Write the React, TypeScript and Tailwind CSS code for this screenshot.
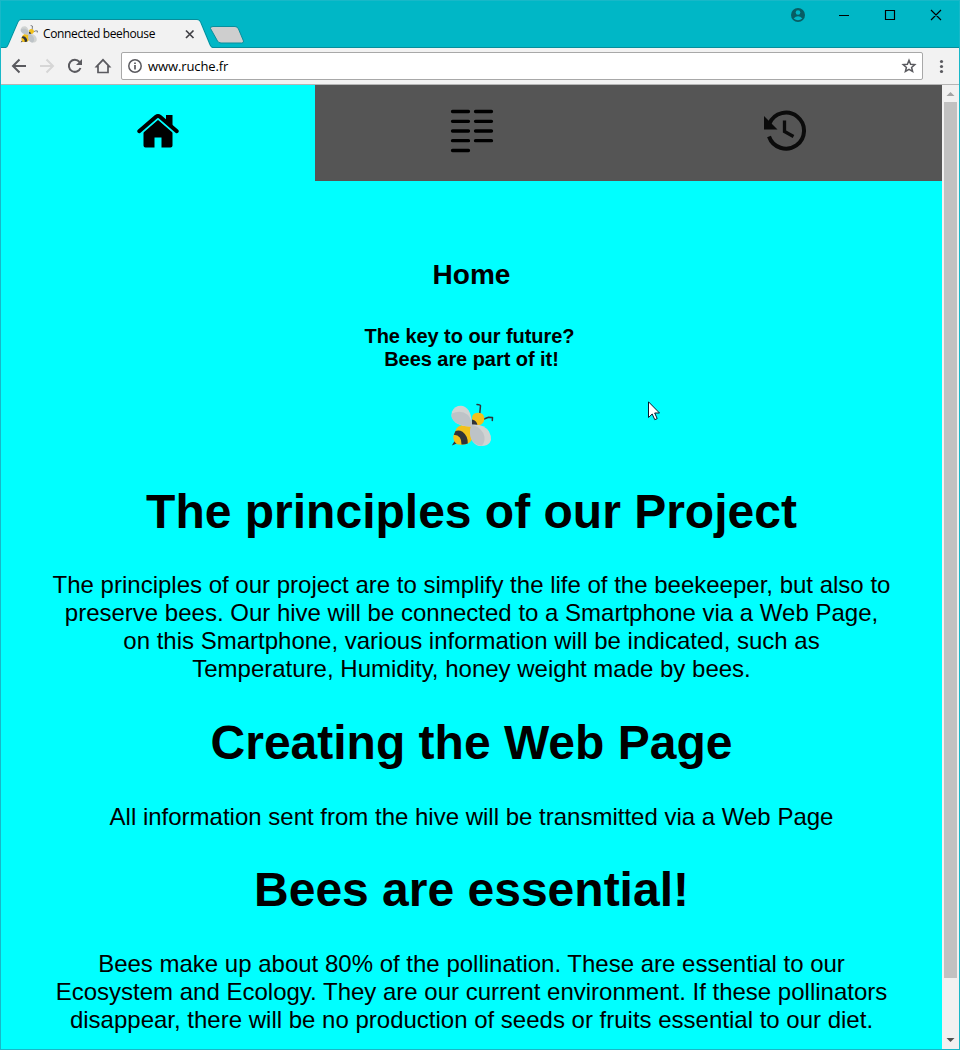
import React from 'react';

function Bee({ className }: { className: string }) {
  return (
    <svg viewBox="0 0 44 44" className={className}>
      <path d="M29.700 11L30.500 2.800Q30.500 2 27 1.600" fill="none" stroke="#303339" strokeWidth="1.500" strokeLinecap="round" strokeLinejoin="round" />
      <path d="M33.500 16.300L38.500 14.300L42.500 14.500L42.300 17.500" fill="none" stroke="#303339" strokeWidth="1.500" strokeLinecap="round" strokeLinejoin="round" />
      <path d="M5 37.500L1.800 42.500L8 40Z" fill="#303339" />
      <path d="M6.700 25Q14 19 22 22L24 33Q21 39 18 40.500Q12 42.500 7 41.300Q2.800 38 3.300 33Z" fill="#f2c11b" />
      <path d="M5.500 28Q9 26.500 12.500 28.800Q18 33 17.800 40.500Q15 41.700 11.500 41.500Q12 32.500 3.800 31.800Z" fill="#303339" />
      <path d="M22.300 13Q24 9.500 28.500 9.700Q34.500 10.200 34.300 16Q34 21.500 27 23L21.500 22Z" fill="#f2c11b" />
      <path d="M22 16.500Q27 17.500 27.500 22.500L21 23Z" fill="#303339" />
      <path d="M22 23.500Q13 24 6 20Q0 15 2 8.500Q5 2 13 3Q22 6 22 23.500Z" fill="#d0d3d2" />
      <path d="M22 23.500Q13 24 5.500 19.500Q0 15 2 10.500Q11 6.500 18 12Q22 17 22 23.500Z" fill="#bdc3c7" />
      <path d="M21.500 21.500Q34 20.500 39 28.500Q44 38 37 42Q33 43.500 28 42.700Q18 39 21.500 21.500Z" fill="#d0d3d2" />
      <path d="M21.500 21.500Q33 25 34.500 34Q35 40 31.500 42.700Q23 42 20.500 34Q19 28 21.500 21.500Z" fill="#bdc3c7" />
    </svg>
  );
}

function TitleBar() {
  return (
    <header className="relative h-12 shrink-0 bg-[#00b7c6]">
      <svg className="absolute left-0 top-0 h-12 w-[960px]" viewBox="0 0 960 48">
        <path d="M0 47.500H6Q7.500 47 8.500 44L18 22Q19 19.500 21 19.500H197Q199.500 19.500 200.500 22L210 44.500Q211 47.500 213 47.500H960" fill="none" stroke="#078d9b" />
        <path d="M6 48Q8 47 9 44L18.500 22Q19.500 20 21 20H197Q199 20 200 22L209.500 45Q210.500 47 212 48Z" fill="#f2f2f2" />
        <path d="M213 26.500H235Q237.500 26.500 238.500 29L243.500 41Q244 43 241.500 43H221Q218.500 43 217.500 41L210.500 28.500Q210 26.500 213 26.500Z" fill="#cecece" stroke="#088f9d" />
        <path d="M186 30.500L193.500 38M193.500 30.500L186 38" stroke="#414146" strokeWidth="1.700" />
        <circle cx="798" cy="15" r="7" fill="#075d64" />
        <circle cx="798" cy="12.500" r="2.300" fill="#00b7c6" />
        <path d="M793.600 18.500Q798 14 802.400 18.500Q798 22 793.600 18.500Z" fill="#00b7c6" />
        <path d="M839 15.500H849M885.500 10.500H894.500V19.500H885.500ZM931 10L941 20M941 10L931 20" fill="none" stroke="#000" strokeWidth="1.150" />
      </svg>
      <div className="absolute left-5 top-[25px] flex h-[18px] items-center gap-[5px]">
        <Bee className="size-[18px]" />
        <span className="whitespace-nowrap font-['Open_Sans','Noto_Sans',sans-serif] text-[12px] leading-[18px] tracking-[-0.37px] text-black">Connected beehouse</span>
      </div>
    </header>
  );
}

function Toolbar() {
  return (
    <div className="flex h-[37px] shrink-0 items-center border-b border-[#b5b5b5] bg-[#f2f2f2]">
      <svg className="h-9 w-[121px] shrink-0" viewBox="0 0 121 36" fill="none" stroke="#5a5a5f" strokeWidth="2">
        <path d="M26 18H13M19.500 11.500L13 18L19.500 24.500" />
        <path d="M40 18H53M46.500 11.500L53 18L46.500 24.500" stroke="#d6d6d6" />
        <path d="M79.500 14A6 6 0 1 0 80.500 20" />
        <path d="M82 11V17H76Z" fill="#5a5a5f" stroke="none" />
        <path d="M96.500 18.700L103 11.800L109.500 18.700H108V24.500H98V18.700Z" strokeWidth="1.700" />
      </svg>
      <div className="flex h-7 w-[802px] items-center rounded-[2px] border border-[#a8a8a8] bg-white pl-[5px] pr-[5px]">
        <svg className="size-4" viewBox="0 0 16 16" fill="none" stroke="#5a5a5f" strokeWidth="1.500">
          <circle cx="8" cy="8" r="6.200" />
          <path d="M8 7V11.500M8 4.500V6" strokeWidth="1.700" />
        </svg>
        <span className="ml-[5px] flex-1 font-['Open_Sans','Noto_Sans',sans-serif] text-[13px] leading-5 tracking-[-0.1px] text-black">www.ruche.fr</span>
        <svg className="size-4" viewBox="0 0 16 16">
          <path d="M8 2.300L9.600 6.200L13.800 6.600L10.600 9.400L11.600 13.500L8 11.300L4.400 13.500L5.400 9.400L2.200 6.600L6.400 6.200Z" fill="none" stroke="#5a5a5f" strokeWidth="1.500" />
        </svg>
      </div>
      <svg className="h-9 w-[37px]" viewBox="0 0 37 36" fill="#5a5a5f">
        <circle cx="18.500" cy="13.500" r="1.600" />
        <circle cx="18.500" cy="18.500" r="1.600" />
        <circle cx="18.500" cy="23.500" r="1.600" />
      </svg>
    </div>
  );
}

function Tabs() {
  return (
    <nav className="grid h-24 grid-cols-[314px_314px_313px] bg-[#555555]">
      <button className="flex justify-center bg-[#00ffff] pt-[25px]" aria-label="Home">
        <svg className="h-11 w-11" viewBox="0 0 44 44">
          <path d="M30 5H36.500V19L30 13Z" fill="#000" />
          <path d="M7.500 21.500L22 9.500L36.500 21.500V35.500Q36.500 37.500 34.500 37.500H25.500V27.500H18.500V37.500H9.500Q7.500 37.500 7.500 35.500Z" fill="#000" />
          <path d="M5 23.600L22 9L39 23.600" fill="none" stroke="#00ffff" strokeWidth="1.500" />
          <path d="M3.200 21.200L20 6.800Q22 5.200 24 6.800L40.800 21.200" fill="none" stroke="#000" strokeWidth="4" strokeLinecap="round" strokeLinejoin="round" />
        </svg>
      </button>
      <button className="flex justify-center pt-6" aria-label="Data">
        <svg className="h-11 w-11" viewBox="0 0 44 44" stroke="#000" strokeWidth="3.300" strokeLinecap="round">
          <path d="M2.500 2.500H18.500M25.500 2.500H41.500M2.500 12.300H18.500M25.500 12.300H41.500M2.500 22H18.500M25.500 22H41.500M2.500 31.700H18.500M25.500 31.700H41.500M2.500 41.500H18.500" />
        </svg>
      </button>
      <button className="flex justify-center pr-0.5 pt-6" aria-label="History">
        <svg className="h-11 w-11" viewBox="0 0 44 44" fill="none" stroke="#0b0b0b" strokeWidth="4">
          <path d="M6.500 14.500A18 18 0 1 1 6 27.500" />
          <path d="M1 7L14.500 20.500H1Z" fill="#0b0b0b" stroke="none" />
          <path d="M21.500 11.500V22.500L30.500 27.500" strokeWidth="3.300" />
        </svg>
      </button>
    </nav>
  );
}

function Section({ title, lines, gap }: { title: string; lines: string[]; gap: string }) {
  return (
    <section>
      <h2 className="text-[48px] font-bold leading-[55px]">{title}</h2>
      <p className={`${gap} text-2xl leading-7`}>
        {lines.map((line) => (
          <span key={line} className="block whitespace-nowrap">{line}</span>
        ))}
      </p>
    </section>
  );
}

function ScrollBar() {
  return (
    <div className="flex w-[17px] shrink-0 flex-col items-center bg-[#f1f1f1]">
      <svg className="h-[17px] w-[17px]" viewBox="0 0 17 17"><path d="M4.500 11L8.500 7L12.500 11Z" fill="#a3a3a3" /></svg>
      <div className="h-[876px] w-[13px] bg-[#c1c1c1]" />
      <svg className="mt-auto h-[17px] w-[17px]" viewBox="0 0 17 17"><path d="M4.500 6H12.500L8.500 10Z" fill="#505050" /></svg>
    </div>
  );
}

export default function App() {
  return (
    <div className="relative flex h-[1050px] w-[960px] flex-col overflow-hidden bg-[#00ffff] text-black">
      <TitleBar />
      <Toolbar />
      <div className="flex min-h-0 flex-1 pb-px pl-px pr-px">
        <main className="w-[941px] shrink-0 bg-[#00ffff] text-center font-['Liberation_Sans',Arial,sans-serif]">
          <Tabs />
          <h1 className="mt-[78px] text-[28px] font-bold leading-8">Home</h1>
          <p className="mt-[34px] text-xl font-bold leading-[23px] tracking-[-0.05px]">
            <span className="block pr-1">The key to our future?</span>
            <span className="block">Bees are part of it!</span>
          </p>
          <div className="mt-8 flex justify-center"><Bee className="h-11 w-11" /></div>
          <div className="mt-[37px] flex flex-col">
            <Section gap="mt-8" title="The principles of our Project" lines={[
              'The principles of our project are to simplify the life of the beekeeper, but also to',
              'preserve bees. Our hive will be connected to a Smartphone via a Web Page,',
              'on this Smartphone, various information will be indicated, such as',
              'Temperature, Humidity, honey weight made by bees.',
            ]} />
            <div className="mt-8">
              <Section gap="mt-[33px]" title="Creating the Web Page" lines={['All information sent from the hive will be transmitted via a Web Page']} />
            </div>
            <div className="mt-[31px]">
              <Section gap="mt-[33px]" title="Bees are essential!" lines={[
                'Bees make up about 80% of the pollination. These are essential to our',
                'Ecosystem and Ecology. They are our current environment. If these pollinators',
                'disappear, there will be no production of seeds or fruits essential to our diet.',
              ]} />
            </div>
          </div>
        </main>
        <ScrollBar />
      </div>
      <div className="pointer-events-none absolute inset-0 border border-[#18b8c8]" />
      <svg className="absolute left-[648px] top-[401px] h-5 w-3" viewBox="0 0 12 20">
        <path d="M.5 .8V16.500L4.200 13L6.800 18.700L9.200 17.600L6.700 12H11.500Z" fill="#fff" stroke="#06172b" />
      </svg>
    </div>
  );
}
